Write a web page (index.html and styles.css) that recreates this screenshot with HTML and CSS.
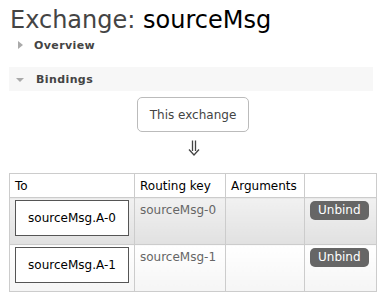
FILE: index.html
```html
<!DOCTYPE html>
<html>
<head>
<meta charset="utf-8">
<link rel="stylesheet" href="styles.css">
</head>
<body>
<div class="page">
  <h1 class="title">Exchange: <b>sourceMsg</b></h1>
  <div class="section closed"><span class="tri tri-right"></span><span class="sec-label">Overview</span></div>
  <div class="section open"><span class="tri tri-down"></span><span class="sec-label">Bindings</span></div>
  <div class="bindings">
    <div class="this-ex">This exchange</div>
    <svg class="arrow" width="12" height="16" viewBox="0 0 12 16" aria-label="&#8659;">
      <path d="M4.5 0.5V11M7.5 0.5V11M1 9.5L6 15L11 9.5" fill="none" stroke="#444" stroke-width="1.3"/>
    </svg>
    <table class="list">
      <thead>
        <tr><th class="c-to">To</th><th class="c-key">Routing key</th><th class="c-args">Arguments</th><th class="c-act"></th></tr>
      </thead>
      <tbody>
        <tr class="alt1">
          <td><span class="qbox">sourceMsg.A-0</span></td>
          <td class="key">sourceMsg-0</td>
          <td></td>
          <td><span class="btn">Unbind</span></td>
        </tr>
        <tr class="alt2">
          <td><span class="qbox">sourceMsg.A-1</span></td>
          <td class="key">sourceMsg-1</td>
          <td></td>
          <td><span class="btn">Unbind</span></td>
        </tr>
      </tbody>
    </table>
  </div>
</div>
</body>
</html>
```

FILE: styles.css
```css
html, body {
  margin: 0;
  padding: 0;
  background: #fff;
}
body {
  font-family: "DejaVu Sans", Verdana, sans-serif;
  font-size: 12px;
  color: #444;
}
.page {
  padding: 5px 7px 0 9px;
}
.title {
  margin: 0;
  font-size: 24px;
  font-weight: normal;
  line-height: 30px;
  color: #444;
  padding-left: 1px;
}
.title b {
  font-weight: normal;
  color: #000;
}
.section {
  display: flex;
  align-items: center;
  font-size: 11px;
  font-weight: bold;
  letter-spacing: 0.4px;
  color: #444;
}
.section.closed {
  margin-top: 2px;
  height: 16px;
}
.section.open {
  margin-top: 14px;
  height: 24px;
  background: #f7f7f7;
  margin-right: 3px;
}
.sec-label {
  padding-top: 1px;
}
.tri {
  display: inline-block;
  width: 0;
  height: 0;
}
.tri-right {
  margin-left: 9px;
  margin-right: 11px;
  border-top: 4px solid transparent;
  border-bottom: 4px solid transparent;
  border-left: 5px solid #aaa;
}
.tri-down {
  margin-left: 7px;
  margin-right: 12px;
  margin-top: 2px;
  border-left: 4px solid transparent;
  border-right: 4px solid transparent;
  border-top: 4px solid #aaa;
}
.bindings {
  width: 368px;
  display: flex;
  flex-direction: column;
  align-items: center;
}
.this-ex {
  margin-top: 6px;
  width: 110px;
  height: 33px;
  border: 1px solid #bbb;
  border-radius: 5px;
  display: flex;
  align-items: center;
  justify-content: center;
  font-size: 12px;
  color: #444;
}
.arrow {
  display: block;
  margin-top: 8px;
  margin-left: 2px;
}
.list {
  margin-top: 17px;
  width: 368px;
  border-collapse: collapse;
  border: 1px solid #ccc;
}
.list th, .list td {
  border: 1px solid #ccc;
  text-align: left;
  vertical-align: top;
}
.list th {
  font-weight: normal;
  color: #000;
  height: 23px;
  vertical-align: middle;
  padding: 0 5px;
  font-size: 12px;
}
.c-to { width: 113px; }
.c-key { width: 80px; }
.c-args { width: 68px; }
.list td {
  padding: 2px 5px 4px 5px;
  height: 37px;
}
.alt1 td {
  background: linear-gradient(#f1f1f1, #e1e1e1);
}
.alt2 td {
  background: linear-gradient(#ffffff, #f5f5f5);
}
.qbox {
  display: block;
  width: 112px;
  padding: 10px 0;
  line-height: 14px;
  border: 1px solid #555;
  background: #fff;
  color: #000;
  text-align: center;
}
.key {
  color: #666;
  padding-top: 5px !important;
  line-height: 14px;
}
.btn {
  display: inline-block;
  margin-top: 1px;
  background: #666;
  color: #fff;
  border-radius: 5px;
  padding: 0 8px;
  line-height: 19px;
  font-size: 12px;
}
```
